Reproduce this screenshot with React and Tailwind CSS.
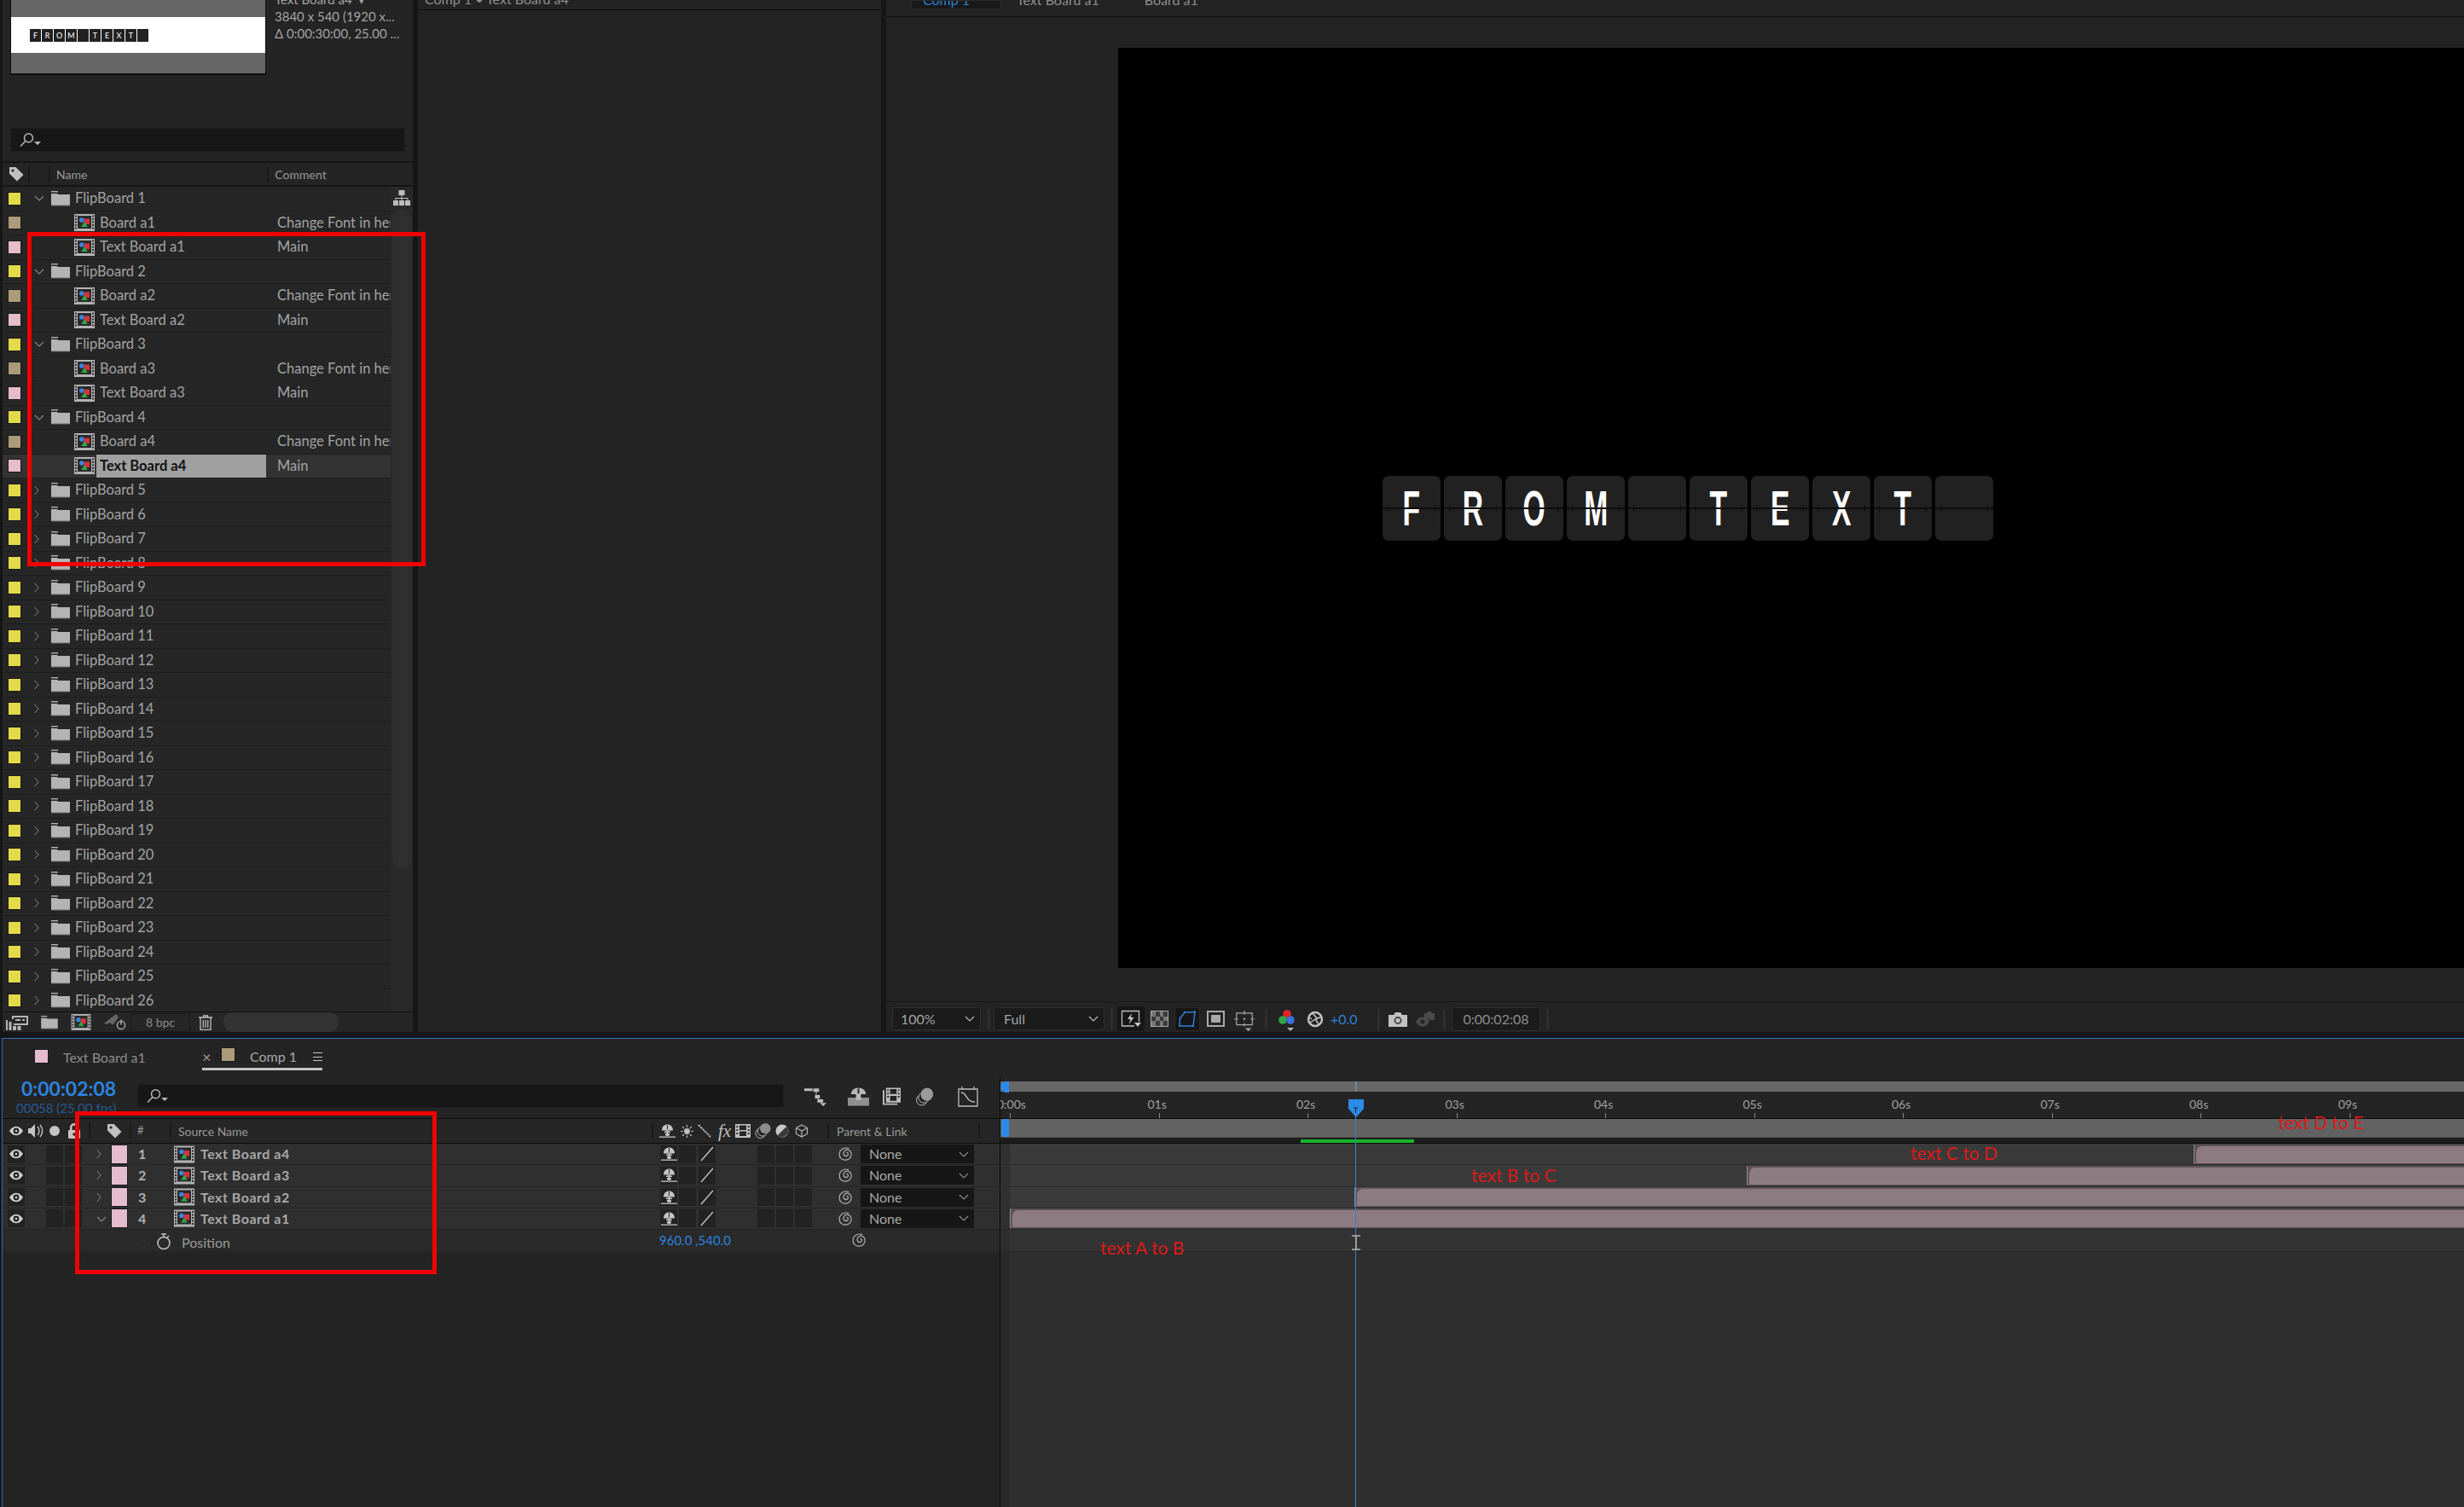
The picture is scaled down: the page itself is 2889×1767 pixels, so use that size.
import React from "react";

const Swatch = ({ c, cls = "w-[14px] h-[14px]" }) => (
  <div className={`${cls} shrink-0 outline outline-1 outline-[#1a1a1a]`} style={{ background: c }} />
);

const CompIcon = ({ cls = "w-[24px] h-[20px]" }) => (
  <svg viewBox="0 0 24 20" className={`${cls} shrink-0`}>
    <rect width="24" height="20" fill="#b4b4b4" />
    <g fill="#2a2a2a">
      {[1.5, 5, 8.5, 12, 15.5].map((y) => (
        <g key={y}>
          <rect x="1" y={y} width="2" height="2" />
          <rect x="21" y={y} width="2" height="2" />
        </g>
      ))}
      <rect x="4" y="2" width="16" height="15" />
    </g>
    <rect x="11.5" y="5.5" width="6.5" height="6.5" fill="#d8323a" />
    <circle cx="8.8" cy="7" r="2.800" fill="#3b86dc" />
    <path d="M12 9l3.800 6H8.200z" fill="#2fa84a" />
  </svg>
);

const Folder = ({ cls = "w-[22px] h-[18px]" }) => (
  <svg viewBox="0 0 22 18" className={`${cls} shrink-0`}>
    <rect x="0" y="0" width="8" height="1.4" fill="#b4b4b4" />
    <path d="M0 3h7l1 1h14v13H0z" fill="#b4b4b4" />
    <rect y="16.4" width="22" height="1" fill="#7c7c7c" />
  </svg>
);

const ChevR = ({ cls = "" }) => (
  <svg viewBox="0 0 6 12" className={`w-[6px] h-[12px] ${cls}`} fill="none" stroke="#8a8a8a" strokeWidth="1">
    <path d="M.7 1l4.500 5-4.500 5" />
  </svg>
);
const ChevD = ({ cls = "", color = "#8a8a8a" }) => (
  <svg viewBox="0 0 12 7" className={`w-[12px] h-[7px] ${cls}`} fill="none" stroke={color} strokeWidth="1.1">
    <path d="M1 1l5 5 5-5" />
  </svg>
);

const Search = () => (
  <svg viewBox="0 0 26 18" className="w-[26px] h-[18px]" fill="none" stroke="#b5b5b5" strokeWidth="1.5">
    <circle cx="10.5" cy="6.8" r="5" />
    <path d="M6.8 10.5L1 16.5" />
    <path d="M17 11h8l-4 4z" fill="#b5b5b5" stroke="none" />
  </svg>
);

const Eye = ({ cls = "w-[16px] h-[12px]" }) => (
  <svg viewBox="0 0 18 13" className={cls}>
    <path d="M0 6.500C3 2 6 .5 9 .5s6 1.500 9 6c-3 4.500-6 6-9 6s-6-1.500-9-6z" fill="#cfcfcf" />
    <circle cx="9" cy="6.500" r="3.800" fill="#222" />
    <circle cx="9" cy="6.500" r="1.500" fill="#cfcfcf" />
  </svg>
);

const Tag = ({ cls = "" }) => (
  <svg viewBox="0 0 18 18" className={`w-[18px] h-[18px] ${cls}`}>
    <path d="M1 1h7.500L17.500 10 10 17.500 1 8.500z" fill="#c0c0c0" />
    <circle cx="5" cy="5" r="1.600" fill="#262626" />
  </svg>
);

const Shy = ({ cls = "w-[19px] h-[18px]", dash = true }) => (
  <svg viewBox="0 0 19 18" className={cls} fill="#c4c4c4">
    <path d="M3 8.500C3 4 6 1.500 9.500 1.500S16 4 16 8.500z" />
    <rect x="8.500" y="8" width="2" height="7" />
    <rect x="6" y="9.500" width="7" height="1.500" />
    <rect x="7" y="12" width="5" height="2.500" />
    <rect x="9" y="2" width="1" height="5.500" fill="#2a2a2a" />
    {dash && <rect x="0" y="15.500" width="19" height="1.300" />}
  </svg>
);

const Spiral = ({ cls = "" }) => (
  <svg viewBox="0 0 18 18" className={`w-[17px] h-[18px] shrink-0 ${cls}`} fill="none" stroke="#b0b0b0" strokeWidth="1.300">
    <path d="M13 2.300C8 .3 1.500 3 1.200 9.300c-.2 5 4 7.700 8 7.300 4.500-.4 7.500-4.300 6.800-8.300-.7-3.800-4.800-5.500-7.500-3.800-2.800 1.700-2.800 6 0 7 2 .8 4-1 3.500-3-.3-1-1.300-1.400-2-1" />
  </svg>
);

const Dark = ({ cls = "", children }) => (
  <div className={`w-[20px] h-[21px] bg-[#222222] flex items-center justify-center shrink-0 ${cls}`}>{children}</div>
);

const Vr = ({ cls = "" }) => <div className={`w-[2px] h-[18px] bg-[#1a1a1a] shrink-0 ${cls}`} />;
const Sep = ({ cls = "" }) => <div className={`w-[3px] h-[24px] bg-[#2e2e2e] shrink-0 ${cls}`} />;

const rows = [];
[1, 2, 3, 4].forEach((i) => {
  rows.push({ t: "f", n: `FlipBoard ${i}`, open: true });
  rows.push({ t: "c", n: `Board a${i}`, c: "#ab9b7a", m: "Change Font in here" });
  rows.push({ t: "c", n: `Text Board a${i}`, c: "#e4bccb", m: "Main", sel: i === 4 });
});
for (let i = 5; i <= 26; i++) rows.push({ t: "f", n: `FlipBoard ${i}` });

const ProjectRow = ({ r }) => (
  <div
    className={`h-[28.5px] shrink-0 flex items-center border-b border-[#1d1d1d] text-[16.5px] text-[#a3a3a3] ${
      r.sel ? "bg-[#333333]" : "bg-[#262626]"
    }`}
  >
    <div className="w-[31px] pl-[7px] shrink-0">
      <Swatch c={r.t === "f" ? "#e3da4a" : r.c} />
    </div>
    {r.t === "f" ? (
      <>
        <div className="w-[26px] pl-[6px] flex items-center shrink-0">{r.open ? <ChevD /> : <ChevR />}</div>
        <Folder />
        <span className="ml-[6px]">{r.n}</span>
      </>
    ) : (
      <>
        <div className="w-[53px] shrink-0" />
        <CompIcon />
        <div
          className={`ml-[2px] w-[199px] h-[27px] pl-[4px] flex items-center shrink-0 ${
            r.sel ? "bg-[#a0a0a0] text-[#111111] font-bold" : ""
          }`}
        >
          {r.n}
        </div>
        <div className="ml-[13px] flex-1 overflow-hidden whitespace-nowrap">{r.m}</div>
      </>
    )}
  </div>
);

const ProjectPanel = () => (
  <div className="w-[481px] ml-[3px] h-[1210px] bg-[#242424] flex flex-col overflow-hidden shrink-0">
    <div className="h-[150px] flex shrink-0">
      <div className="ml-[9px] w-[300px] h-[88px] bg-[#666666] border-b-2 border-x border-[#111111] flex items-center shrink-0">
        <div className="w-full h-[42px] bg-white flex items-center pl-[22px] gap-[1px] -mt-[4px]">
          {["F", "R", "O", "M", "", "T", "E", "X", "T", ""].map((l, i) => (
            <div key={i} className="w-[13px] h-[15px] bg-[#222222] text-white text-[9px] leading-[15px] text-center">
              {l}
            </div>
          ))}
        </div>
      </div>
      <div className="ml-[10px] -mt-[11px] text-[15px] leading-[20px] text-[#a3a3a3] whitespace-nowrap overflow-hidden">
        <div>Text Board a4 &nbsp;▾</div>
        <div>3840 x 540 (1920 x...</div>
        <div>Δ 0:00:30:00, 25.00 ...</div>
      </div>
    </div>
    <div className="mx-[9px] h-[28px] bg-[#171717] rounded-[3px] border border-[#1f1f1f] flex items-center pl-[10px] shrink-0">
      <Search />
    </div>
    <div className="h-[11px] shrink-0" />
    <div className="h-[30px] border-y-2 border-[#151515] flex items-center text-[14px] text-[#999999] shrink-0">
      <Tag cls="ml-[7px]" />
      <Vr cls="ml-[5px]" />
      <Vr cls="ml-[22px]" />
      <span className="ml-[7px]">Name</span>
      <Vr cls="ml-[211px]" />
      <span className="ml-[7px]">Comment</span>
    </div>
    <div className="flex h-[967px] shrink-0 overflow-hidden">
      <div className="w-[455px] flex flex-col shrink-0">
        {rows.map((r) => (
          <ProjectRow key={r.n} r={r} />
        ))}
      </div>
      <div className="w-[26px] bg-[#292929] shrink-0 flex flex-col items-center">
        <svg viewBox="0 0 20 18" className="w-[20px] h-[18px] mt-[4px] shrink-0" fill="#bdbdbd">
          <rect x="6.500" y="0" width="7" height="6" />
          <rect x="0" y="12" width="6" height="6" />
          <rect x="7" y="12" width="6" height="6" />
          <rect x="14" y="12" width="6" height="6" />
          <path d="M9.500 6h1v3H17.500v3h-1V10h-6v2h-1v-2h-6v2h-1V9h7z" />
        </svg>
        <div className="w-[23px] h-[772px] mt-[5px] rounded-full bg-[#2f2f2f]" />
      </div>
    </div>
    <div className="h-[24px] border-t border-[#111111] bg-[#262626] flex items-center shrink-0">
      <svg viewBox="0 0 26 18" className="w-[26px] h-[18px] ml-[4px]" fill="#b5b5b5">
        <path d="M7 1h19v11H9v-2h15V3H9v2H7z" />
        <rect x="11" y="5" width="6" height="2" />
        <rect x="19" y="5" width="3" height="2" />
        <path d="M0 6h2v12H0zM3.500 8h3v10h-3zM8 13h4v5H8zM13.500 13h4v5h-4z" />
      </svg>
      <Folder cls="w-[20px] h-[16px] ml-[15px]" />
      <CompIcon cls="w-[26px] h-[19px] ml-[14px]" />
      <svg viewBox="0 0 26 22" className="w-[26px] h-[22px] ml-[14px]">
        <path d="M0 12L14 1l3 4-7 9-3-3-4 2z" fill="#666666" />
        <circle cx="20" cy="14" r="4.600" fill="none" stroke="#b0b0b0" strokeWidth="1.400" />
        <rect x="19.300" y="7.500" width="1.400" height="6" fill="#b0b0b0" />
      </svg>
      <div className="ml-[5px] w-[70px] h-[22px] border border-[#1a1a1a] rounded-[2px] flex items-center justify-center text-[14px] text-[#8c8c8c]">
        8 bpc
      </div>
      <svg viewBox="0 0 16 18" className="w-[16px] h-[18px] ml-[10px]" fill="none" stroke="#bdbdbd" strokeWidth="1.300">
        <path d="M0 3h16M5.500 3V1h5v2M2 3v14.300h12V3M5.300 6v9M8 6v9M10.700 6v9" />
      </svg>
      <div className="ml-[13px] w-[135px] h-[23px] rounded-full bg-[#333333]" />
    </div>
  </div>
);

const Flip = ({ l }) => (
  <div className="relative w-[68px] h-[76px] rounded-[7px] bg-[#212121] flex items-center justify-center overflow-hidden shrink-0">
    <span className="inline-block font-['Liberation_Sans',sans-serif] font-bold text-[58px] leading-none text-white scale-x-[.58]">
      {l}
    </span>
    <div className="absolute left-0 right-0 top-[37px] h-[2px] bg-[#0d0d0d]" />
    <div className="absolute left-[6px] top-[35px] w-[1px] h-[7px] bg-[#0d0d0d]" />
    <div className="absolute left-[61px] top-[35px] w-[1px] h-[7px] bg-[#0d0d0d]" />
  </div>
);

const ToolBtn = ({ cls = "", children }) => <div className={`flex items-center justify-center shrink-0 ${cls}`}>{children}</div>;

const Viewer = () => (
  <div className="flex-1 h-[1210px] bg-[#232323] flex flex-col overflow-hidden">
    <div className="h-[20px] border-b border-[#0f0f0f] flex text-[16px] leading-[20px] shrink-0 overflow-hidden">
      <div className="ml-[29px] w-[106px] h-[11px] bg-[#191919] rounded-b-[3px] border border-[#2a2a2a] overflow-hidden">
        <div className="-mt-[11px] pl-[13px] text-[#2d82d8]">Comp 1</div>
      </div>
      <div className="ml-[18px] -mt-[10px] text-[#8e8e8e]">Text Board a1</div>
      <div className="ml-[53px] -mt-[10px] text-[#8e8e8e]">Board a1</div>
    </div>
    <div className="h-[36px] shrink-0" />
    <div className="h-[1079px] ml-[272px] bg-black flex items-center pl-[310px] gap-[4px] shrink-0">
      {["F", "R", "O", "M", "", "T", "E", "X", "T", ""].map((l, i) => (
        <Flip key={i} l={l} />
      ))}
    </div>
    <div className="h-[39px] shrink-0" />
    <div className="h-[36px] pt-[4px] border-t border-[#191919] flex items-center shrink-0 text-[#a3a3a3]">
      <div className="ml-[7px] w-[104px] h-[27px] bg-[#1b1b1b] border border-[#2e2e2e] rounded-[3px] flex items-center justify-between pl-[9px] pr-[6px] text-[16px] shrink-0">
        100%
        <ChevD color="#bdbdbd" />
      </div>
      <Sep cls="ml-[8px]" />
      <div className="ml-[4px] w-[130px] h-[27px] bg-[#1b1b1b] border border-[#2e2e2e] rounded-[3px] flex items-center justify-between pl-[11px] pr-[6px] text-[16px] shrink-0">
        Full
        <ChevD color="#bdbdbd" />
      </div>
      <Sep cls="ml-[7px]" />
      <ToolBtn cls="ml-[5px] w-[32px] h-[29px] bg-[#161616] rounded-[3px]">
        <svg viewBox="0 0 24 22" className="w-[24px] h-[22px]" fill="none" stroke="#c0c0c0" strokeWidth="1.300">
          <path d="M16 19H1.500V1.500h20V14" />
          <path d="M13 4l-5 7h3.500l-2 6 6-8h-3.500z" fill="#c0c0c0" stroke="none" />
          <path d="M16 15h8l-4 5z" fill="#c0c0c0" stroke="none" />
        </svg>
      </ToolBtn>
      <ToolBtn cls="ml-[7px] w-[21px] h-[19px] border border-[#aaaaaa]">
        <div className="grid grid-cols-4 w-full h-full">
          {Array.from({ length: 12 }).map((_, i) => (
            <div key={i} className={(i + Math.floor(i / 4)) % 2 ? "bg-[#3a3a3a]" : "bg-[#777777]"} />
          ))}
        </div>
      </ToolBtn>
      <ToolBtn cls="ml-[7px] w-[30px] h-[28px] bg-[#161616] border border-[#2a2a2a] rounded-[3px]">
        <svg viewBox="0 0 22 20" className="w-[22px] h-[20px]" fill="#2f7fd6" stroke="#2f7fd6" strokeWidth="1.500">
          <path d="M2 18L2.500 9 8 2l12-.500L18 18z" fill="none" />
          {[[2, 18], [2.5, 9], [8, 2], [20, 1.5], [18, 18]].map(([x, y]) => (
            <rect key={x} x={x - 1} y={y - 1} width="2" height="2" stroke="none" />
          ))}
        </svg>
      </ToolBtn>
      <ToolBtn cls="ml-[8px] w-[21px] h-[19px] border-2 border-[#a8a8a8]">
        <div className="w-[11px] h-[9px] bg-[#a8a8a8]" />
      </ToolBtn>
      <svg viewBox="0 0 26 28" className="ml-[11px] w-[24px] h-[26px] shrink-0 mt-[6px]" fill="none" stroke="#a8a8a8" strokeWidth="1.300">
        <path d="M3 3h20v15H3zM13 0v5M13 16v4M0 10.500h5M21 10.500h5M13 9v3M11.500 10.500h3" />
        <path d="M14 22h8l-4 4z" fill="#a8a8a8" stroke="none" />
      </svg>
      <Sep cls="ml-[12px]" />
      <svg viewBox="0 0 20 28" className="ml-[13px] w-[20px] h-[28px] shrink-0 mt-[4px]">
        <circle cx="10" cy="6" r="4.800" fill="#e0242a" />
        <circle cx="5" cy="13" r="4.800" fill="#2fa84a" />
        <circle cx="14" cy="13" r="4.800" fill="#3c6fe0" />
        <path d="M10 22h8l-4 4z" fill="#b5b5b5" />
      </svg>
      <svg viewBox="0 0 20 20" className="ml-[13px] w-[20px] h-[20px] shrink-0" fill="none" stroke="#c4c4c4" strokeWidth="2.400">
        <circle cx="10" cy="10" r="8" />
        <path d="M6 2l7 8M18 7l-8 3M15 17l-5-7M3 15l7-5M2 7l4 3" strokeWidth="1.500" />
      </svg>
      <span className="ml-[8px] text-[16px] text-[#2f7fd6] w-[31px] shrink-0">+0.0</span>
      <Sep cls="ml-[24px]" />
      <svg viewBox="0 0 22 18" className="ml-[10px] w-[22px] h-[18px] shrink-0">
        <path d="M0 4h6l2-3h6l2 3h6v14H0z" fill="#c2c2c2" />
        <circle cx="11" cy="10.500" r="4.400" fill="#3a3a3a" />
        <circle cx="11" cy="10.500" r="2.700" fill="#c2c2c2" />
      </svg>
      <svg viewBox="0 0 22 20" className="ml-[10px] w-[22px] h-[20px] shrink-0">
        <path d="M0 13c3-4.500 5-5.500 8-5.500s5 1 8 5.500c-3 4.500-5 5.500-8 5.500s-5-1-8-5.500z" fill="#4a4a4a" />
        <circle cx="8" cy="13" r="2.500" fill="#232323" />
        <path d="M10 3h3l1-2h4l1 2h3v8h-5c-2-1-5-2-7-2z" fill="#4a4a4a" />
      </svg>
      <Sep cls="ml-[10px]" />
      <div className="ml-[7px] w-[104px] h-[28px] bg-[#1b1b1b] border border-[#2e2e2e] rounded-[3px] flex items-center justify-center text-[16px] text-[#8c8c8c] shrink-0">
        0:00:02:08
      </div>
      <Sep cls="ml-[7px]" />
    </div>
  </div>
);

const LayerRow = ({ i, open }) => (
  <div className="h-[25.25px] shrink-0 bg-[#2f2f2f] border-b border-[#242424] flex items-center">
    <Dark cls="ml-[6px]"><Eye /></Dark>
    <Dark cls="ml-[25px]" />
    <Dark cls="ml-[2px]" />
    <div className="w-[18px] ml-[17px] flex shrink-0">{open ? <ChevD cls="mt-[1px]" /> : <ChevR />}</div>
    <Swatch c="#e4bccb" cls="w-[18px] h-[21px]" />
    <div className="w-[55px] pl-[13px] text-[16px] font-bold text-[#b0b0b0] shrink-0">{i}</div>
    <CompIcon cls="w-[24px] h-[21px]" />
    <div className="w-[546px] pl-[7px] text-[16px] tracking-[0.5px] font-bold text-[#a8a8a8] shrink-0">Text Board a{5 - i}</div>
    <Dark><Shy /></Dark>
    <Dark cls="ml-[2px]" />
    <Dark cls="ml-[3px]">
      <svg viewBox="0 0 18 18" className="w-[18px] h-[18px]" stroke="#bdbdbd" strokeWidth="1.500"><path d="M2 17L16 1" /></svg>
    </Dark>
    <Dark cls="ml-[49px]" />
    <Dark cls="ml-[2px]" />
    <Dark cls="ml-[2px]" />
    <Spiral cls="ml-[31px]" />
    <div className="ml-[9px] w-[133px] h-[22px] bg-[#161616] flex items-center justify-between pl-[10px] pr-[6px] text-[16px] text-[#a8a8a8] shrink-0">
      None
      <ChevD />
    </div>
  </div>
);

const TimelineHeader = () => (
  <div className="h-[30px] border-y border-[#0c0c0c] flex items-center text-[14px] text-[#999999] bg-[#262626] shrink-0">
    <Eye cls="ml-[8px] w-[16px] h-[12px]" />
    <svg viewBox="0 0 18 18" className="ml-[6px] w-[18px] h-[18px]">
      <path d="M0 6h3l5-5v16l-5-5H0z" fill="#c4c4c4" />
      <path d="M11 4c2.500 2.500 2.500 7.500 0 10M14 2c3.500 4 3.500 10 0 14" fill="none" stroke="#c4c4c4" strokeWidth="1.400" />
    </svg>
    <div className="ml-[7px] w-[12px] h-[12px] rounded-full bg-[#c4c4c4]" />
    <svg viewBox="0 0 14 18" className="ml-[10px] w-[14px] h-[18px]">
      <path d="M2 8V5a5 5 0 0 1 10 0h-2.500a2.500 2.500 0 0 0-5 0v3z" fill="#c4c4c4" />
      <rect x="0" y="8" width="14" height="10" rx="1" fill="#c4c4c4" />
      <circle cx="7" cy="13" r="1.800" fill="#262626" />
    </svg>
    <Vr cls="ml-[10px]" />
    <Tag cls="ml-[19px]" />
    <Vr cls="ml-[9px]" />
    <span className="ml-[7px] w-[38px] text-[13px]">#</span>
    <Vr />
    <span className="ml-[8px] w-[555px] whitespace-nowrap">Source Name</span>
    <Vr />
    <Shy cls="ml-[7px] w-[19px] h-[18px]" />
    <svg viewBox="0 0 16 16" className="ml-[6px] w-[15px] h-[15px]" fill="#c0c0c0" stroke="#c0c0c0" strokeWidth="1.300">
      <circle cx="8" cy="8" r="3" />
      <path d="M8 0v3M8 13v3M0 8h3M13 8h3M2.300 2.300l2 2M11.700 11.700l2 2M2.300 13.700l2-2M11.700 4.300l2-2" />
    </svg>
    <svg viewBox="0 0 16 16" className="ml-[5px] w-[16px] h-[16px]" stroke="#c0c0c0" strokeWidth="1.800" strokeDasharray="2.500 1"><path d="M1 1l14 14" /></svg>
    <span className="ml-[8px] w-[17px] font-['Liberation_Serif',serif] italic text-[21px] leading-none text-[#c0c0c0] shrink-0">fx</span>
    <svg viewBox="0 0 18 20" className="ml-[3px] w-[18px] h-[20px]" fill="#c0c0c0">
      <path d="M0 2h18v16H0z" />
      <path d="M1.300 4h2v2h-2zM1.300 8h2v2h-2zM1.300 12h2v2h-2zM14.700 4h2v2h-2zM14.700 8h2v2h-2zM14.700 12h2v2h-2zM5 3.500h8V9H5zM5 10.500h8V16H5z" fill="#262626" />
    </svg>
    <svg viewBox="0 0 20 20" className="ml-[5px] w-[19px] h-[20px]">
      <circle cx="7" cy="13" r="6" fill="none" stroke="#c0c0c0" />
      <circle cx="9.500" cy="10.500" r="6" fill="#262626" stroke="#c0c0c0" />
      <circle cx="13" cy="7" r="6.500" fill="#8c8c8c" />
    </svg>
    <svg viewBox="0 0 16 16" className="ml-[5px] w-[16px] h-[16px]">
      <circle cx="8" cy="8" r="7.500" fill="#c8c8c8" />
      <path d="M13.300 2.700A7.500 7.500 0 0 1 2.700 13.300z" fill="#3a3a3a" />
    </svg>
    <svg viewBox="0 0 16 16" className="ml-[7px] w-[16px] h-[16px]" fill="none" stroke="#b5b5b5" strokeWidth="1.200">
      <path d="M8 1l6.500 3.500v7L8 15l-6.500-3.500v-7zM1.500 4.500L8 8l6.500-3.500M8 8v7" />
    </svg>
    <Vr cls="ml-[22px]" />
    <span className="ml-[9px] w-[166px] whitespace-nowrap">Parent &amp; Link</span>
    <Vr />
  </div>
);

const ticks = ["0:00s", "01s", "02s", "03s", "04s", "05s", "06s", "07s", "08s", "09s"];

const TrackRow = ({ ml }) => (
  <div className="h-[25.25px] shrink-0 border-b border-[#2a2a2a] flex bg-[#3a3a3a]">
    <div className="w-[11px] bg-[#303030] shrink-0" />
    <div className="flex-1 h-full flex flex-col justify-center overflow-hidden">
      <div className="h-[23px] bg-[#5e5258] pl-[2px] pt-[2px] border-l border-[#8c8c8c]" style={{ marginLeft: ml }}>
        <div className="h-[20px] bg-[#8d7b82] rounded-tl-[7px]" />
      </div>
    </div>
  </div>
);

const Timeline = () => (
  <div className="h-[550px] bg-[#242424] border-t border-l-[1px] border-[#2c6fb5] ml-[2px] flex flex-col overflow-hidden shrink-0">
    <div className="h-[44px] flex items-center text-[16px] text-[#8c8c8c] shrink-0">
      <Swatch c="#e4bccb" cls="ml-[38px] w-[15px] h-[15px] -mt-[4px] outline-0" />
      <span className="ml-[18px] w-[163px]">Text Board a1</span>
      <div className="h-[29px] w-[141px] mt-[1px] border-b-[3px] border-[#c4c4c4] flex items-center text-[#a8a8a8] shrink-0">
        <span className="text-[18px] w-[23px] text-[#999999] leading-none">×</span>
        <Swatch c="#ab9b7a" cls="w-[15px] h-[15px] -mt-[6px] outline-0" />
        <span className="ml-[18px] w-[74px]">Comp 1</span>
        <div className="w-[11px] h-[10px] border-y border-[#c4c4c4] flex items-center shrink-0">
          <div className="w-full h-[1px] bg-[#c4c4c4]" />
        </div>
      </div>
    </div>
    <div className="flex-1 flex min-h-0">
      <div className="w-[1169px] flex flex-col shrink-0">
        <div className="h-[49px] flex shrink-0">
          <div className="w-[158px] pl-[22px] shrink-0 whitespace-nowrap">
            <div className="h-[28px] text-[23px] font-bold leading-[28px] text-[#2b83de]">0:00:02:08</div>
            <div className="h-[19px] -ml-[6px] text-[15px] leading-[19px] text-[#27598f]">00058 (25.00 fps)</div>
          </div>
          <div className="mt-[9px] w-[758px] h-[28px] bg-[#171717] rounded-[3px] border border-[#1f1f1f] flex items-center pl-[10px] shrink-0">
            <Search />
          </div>
          <svg viewBox="0 0 28 24" className="ml-[24px] mt-[12px] w-[27px] h-[24px] shrink-0" fill="#bdbdbd">
            <path d="M0 2h10v3H0zM11 2h7v4h-7zM14 6h1v4h-1zM13 10h6v4h-6zM16 14h1v4h-1zM16 15h7v4h-7z" />
            <path d="M19 19.500h8l-4 4z" />
          </svg>
          <svg viewBox="0 0 26 24" className="ml-[24px] mt-[12px] w-[25px] h-[24px] shrink-0" fill="#b8b8b8">
            <path d="M4 9C4 4 8 1 13 1s9 3 9 8z" />
            <path d="M0 13h26v10H0z" fill="#8f8f8f" />
            <rect x="10" y="8" width="6" height="8" />
            <rect x="12" y="2" width="2" height="6" fill="#242424" />
          </svg>
          <svg viewBox="0 0 22 24" className="ml-[16px] mt-[12px] w-[21px] h-[24px] shrink-0" fill="#bdbdbd">
            <path d="M0 4h2v16h16v2H0zM4 1h18v18H4z" />
            <path d="M5.500 3h2v2h-2zM5.500 7h2v2h-2zM5.500 11h2v2h-2zM18.500 3h2v2h-2zM18.500 7h2v2h-2zM18.500 11h2v2h-2zM9 2.500h8v6H9zM9 11h8v6H9z" fill="#242424" />
          </svg>
          <svg viewBox="0 0 22 24" className="ml-[18px] mt-[12px] w-[21px] h-[24px] shrink-0">
            <circle cx="7" cy="16" r="6.500" fill="none" stroke="#bdbdbd" />
            <circle cx="9.500" cy="13" r="6.500" fill="#242424" stroke="#bdbdbd" />
            <ellipse cx="13.500" cy="9" rx="7.500" ry="8" fill="#9a9a9a" transform="rotate(25 13.500 9)" />
          </svg>
          <svg viewBox="0 0 24 24" className="ml-[28px] mt-[12px] w-[24px] h-[24px] shrink-0" fill="none" stroke="#bdbdbd" strokeWidth="1.300">
            <path d="M1 3h22v20H1zM5 0v3M19 0v3" />
            <path d="M4 7c7 0 5 11 16 11" strokeWidth="1.400" />
          </svg>
        </div>
        <TimelineHeader />
        <LayerRow i={1} />
        <LayerRow i={2} />
        <LayerRow i={3} />
        <LayerRow i={4} open />
        <div className="h-[26px] bg-[#2a2a2a] border-b border-[#242424] flex items-center shrink-0">
          <div className="ml-[165px] w-[2px] h-[2px] bg-[#3a3a3a]" />
          <svg viewBox="0 0 18 20" className="ml-[13px] mt-[3px] w-[18px] h-[20px] shrink-0" fill="none" stroke="#c4c4c4" strokeWidth="1.500">
            <circle cx="9" cy="11.500" r="7" />
            <path d="M6 1h6M9 1v3M15 3l-2 2" />
          </svg>
          <span className="ml-[12px] mt-[5px] w-[560px] text-[16px] text-[#9a9a9a]">Position</span>
          <span className="w-[226px] text-[15px] text-[#2b83de] -mt-[1px]">960.0 ,540.0</span>
          <Spiral cls="-mt-[2px]" />
        </div>
      </div>
      <div className="relative flex-1 border-l border-[#0c0c0c] flex flex-col min-w-0">
        <div className="h-[49px] pt-[6px] flex flex-col shrink-0 overflow-hidden">
          <div className="h-[12px] bg-[#686868] flex items-center shrink-0">
            <div className="w-[10px] h-[13px] bg-[#2d8be8] rounded-l-full shrink-0" />
            <div className="ml-[406px] w-[2px] h-full bg-[#6b8aa8] shrink-0" />
          </div>
          <div className="flex-1 flex pl-[11px] text-[14px] text-[#a0a0a0] whitespace-nowrap">
            {ticks.map((t, i) => (
              <div key={t} className="w-[174.5px] shrink-0 flex flex-col">
                <span className={`h-[21px] leading-[21px] mt-[4px] ${i === 0 ? "-ml-[15px]" : "-ml-[13px]"}`}>{t}</span>
                <div className="w-[1px] h-[7px] bg-[#8a8a8a]" />
              </div>
            ))}
          </div>
        </div>
        <div className="h-[30px] border-y border-[#0c0c0c] bg-[#1c1c1c] flex flex-col shrink-0">
          <div className="h-[22px] bg-[#626262] border-b border-[#545454] flex shrink-0">
            <div className="ml-[1px] w-[9px] h-full bg-[#2d8be8] rounded-l-[4px]" />
          </div>
          <div className="ml-[352px] mt-[2px] w-[133px] h-[4px] bg-[#18b52c]" />
        </div>
        <TrackRow ml={1388} />
        <TrackRow ml={864} />
        <TrackRow ml={404} />
        <TrackRow ml={0} />
        <div className="h-[26px] bg-[#333333] border-b border-[#292929] flex shrink-0">
          <div className="w-[11px] bg-[#2e2e2e]" />
        </div>
        <div className="flex-1 bg-[#2e2e2e] flex">
          <div className="w-[11px] bg-[#292929]" />
        </div>
        <div className="absolute left-[416px] top-[26px] bottom-0 w-[1px] bg-[#3a7fd0]" />
        <svg viewBox="0 0 18 21" className="absolute left-[408px] top-[27px] w-[18px] h-[21px]">
          <path d="M0 0h18v11l-9 10-9-10z" fill="#2d8be8" />
          <path d="M6 10h5M8.500 10v6" stroke="#123" strokeWidth="1" />
        </svg>
        <svg viewBox="0 0 10 18" className="absolute left-[412px] top-[186px] w-[10px] h-[18px]" fill="none" stroke="#b5b5b5" strokeWidth="1.500">
          <path d="M0 1h10M0 17h10M5 1v16" />
        </svg>
      </div>
    </div>
  </div>
);

const redLabels = [
  { t: "text D to E", c: "left-[2671px] top-[1302px]" },
  { t: "text C to D", c: "left-[2240px] top-[1338px]" },
  { t: "text B to C", c: "left-[1725px] top-[1364px]" },
  { t: "text A to B", c: "left-[1290px] top-[1449px]" },
];

export default function App() {
  return (
    <div className="relative w-[2889px] h-[1767px] bg-[#161616] overflow-hidden font-['Lato',sans-serif]">
      <div className="h-[1217px] flex pb-[7px]">
        <ProjectPanel />
        <div className="w-[6px] shrink-0" />
        <div className="w-[543px] h-[1210px] bg-[#232323] shrink-0 flex flex-col">
          <div className="h-[12px] mx-[1px] border-b border-[#0f0f0f] overflow-hidden shrink-0">
            <div className="-mt-[11px] pl-[7px] text-[16px] leading-[20px] text-[#8e8e8e]">Comp 1 • Text Board a4</div>
          </div>
        </div>
        <div className="w-[6px] shrink-0" />
        <Viewer />
      </div>
      <Timeline />
      <div className="absolute left-[32px] top-[272px] w-[467px] h-[392px] border-[5px] border-[#f00000]" />
      <div className="absolute left-[88px] top-[1303px] w-[424px] h-[191px] border-[5px] border-[#f00000]" />
      {redLabels.map((l) => (
        <div key={l.t} className={`absolute ${l.c} text-[21px] leading-[28px] text-[#dd1a1a]`}>
          {l.t}
        </div>
      ))}
    </div>
  );
}
